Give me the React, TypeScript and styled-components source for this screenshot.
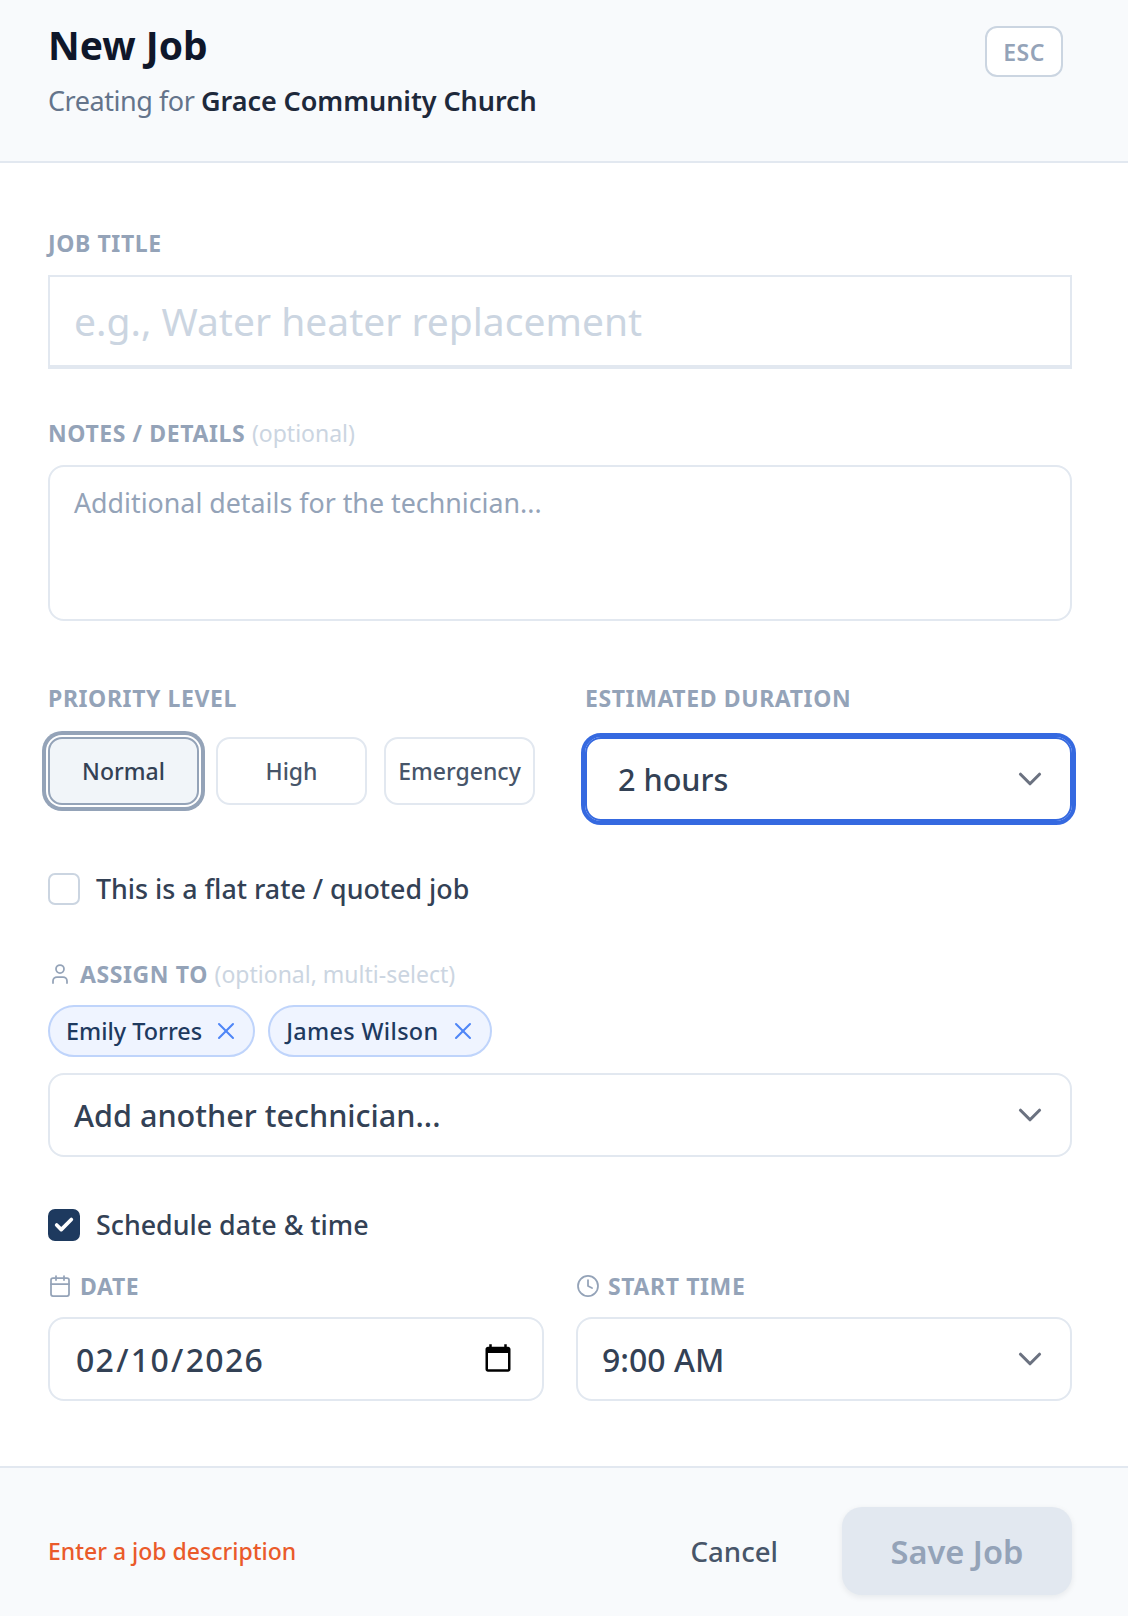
import * as React from "react";
import styled, { createGlobalStyle } from "styled-components";
import { Calendar, Check, ChevronDown, Clock, User, X } from "lucide-react";

const GlobalStyle = createGlobalStyle`
    html, body {
        margin: 0;
        background: #ffffff;
    }
    * {
        box-sizing: border-box;
    }
`;

const SModal = styled.div`
    width: 1128px;
    height: 1616px;
    display: flex;
    flex-direction: column;
    font-family: "Noto Sans", "Open Sans", sans-serif;
    color: #334155;
`;

const SHeader = styled.header`
    height: 163px;
    padding: 23px 65px 0 48px;
    display: flex;
    justify-content: space-between;
    align-items: flex-start;
    background: #f8fafc;
    border-bottom: 2px solid #e2e8f0;
`;

const STitle = styled.h1`
    margin: 0;
    font-size: 39px;
    line-height: 44px;
    font-weight: 700;
    color: #0f172a;
`;

const SSubtitle = styled.p`
    margin: 17px 0 0;
    font-size: 27px;
    line-height: 34px;
    color: #64748b;
    letter-spacing: -0.45px;

    strong {
        font-weight: 600;
        letter-spacing: -0.07px;
        color: #1e293b;
    }
`;

const SEsc = styled.span`
    margin-top: 3px;
    width: 78px;
    height: 51px;
    display: flex;
    align-items: center;
    justify-content: center;
    background: #ffffff;
    border: 2px solid #cbd5e1;
    border-radius: 12px;
    font-size: 23px;
    font-weight: 600;
    letter-spacing: 0.5px;
    color: #94a3b8;
`;

const SForm = styled.form`
    flex: 1;
    padding: 66px 56px 0 48px;
    display: flex;
    flex-direction: column;
`;

const SLabel = styled.label<{ $mb?: number }>`
    display: flex;
    align-items: center;
    gap: 8px;
    height: 28px;
    margin-bottom: ${({ $mb }) => $mb ?? 16}px;
    font-size: 23px;
    font-weight: 700;
    letter-spacing: 0.6px;
    color: #94a3b8;
    white-space: pre;

    svg {
        color: #94a3b8;
    }
`;

const SOptional = styled.span`
    font-weight: 400;
    letter-spacing: 0;
    color: #cbd5e1;
`;

const STitleInput = styled.input`
    width: 100%;
    height: 94px;
    padding: 0 24px 2px;
    border: 2px solid #e2e8f0;
    border-bottom-width: 4px;
    border-radius: 0;
    outline: none;
    font-family: inherit;
    font-size: 39px;
    color: #334155;

    &::placeholder {
        color: #cbd5e1;
    }
`;

const SNotes = styled.textarea`
    display: block;
    width: 100%;
    height: 156px;
    padding: 19px 24px;
    border: 2px solid #e2e8f0;
    border-radius: 16px;
    outline: none;
    resize: none;
    font-family: inherit;
    font-size: 26.8px;
    line-height: 34px;

    &::placeholder {
        color: #94a3b8;
    }
`;

const SColumns = styled.div<{ $gap: number }>`
    display: grid;
    grid-template-columns: 1fr 1fr;
    column-gap: ${({ $gap }) => $gap}px;
`;

const SPriorityRow = styled.div`
    display: grid;
    grid-template-columns: repeat(3, 1fr);
    gap: 17px;
`;

const SPriority = styled.button<{ $active?: boolean }>`
    height: 68px;
    padding: 0;
    font-family: inherit;
    font-size: 23px;
    font-weight: 500;
    color: #475569;
    background: ${({ $active }) => ($active ? "#f1f5f9" : "#ffffff")};
    border: 2px solid ${({ $active }) => ($active ? "#94a3b8" : "#e2e8f0")};
    border-radius: 14px;
    ${({ $active }) =>
        $active
            ? `color: #334155; box-shadow: 0 0 0 2px #fff, 0 0 0 6px #94a3b8;`
            : ""}
`;

const SSelect = styled.div<{ $focused?: boolean; $size?: number }>`
    height: 84px;
    padding: 0 21px 0 ${({ $focused }) => ($focused ? 31 : 24)}px;
    display: flex;
    align-items: center;
    justify-content: space-between;
    font-size: ${({ $size }) => $size ?? 30.6}px;
    font-weight: 500;
    color: #334155;
    background: #ffffff;
    border: 2px solid #e2e8f0;
    border-radius: 16px;
    ${({ $focused }) =>
        $focused ? `border-color: #3569e0; outline: 4px solid #3569e0;` : ""}

    svg {
        color: #6b7280;
    }
`;

const SCheckRow = styled.div<{ $mt: number }>`
    display: flex;
    align-items: center;
    gap: 16px;
    height: 32px;
    margin-top: ${({ $mt }) => $mt}px;
    font-size: 26.8px;
    line-height: 32px;
    font-weight: 500;
    color: #334155;
`;

const SCheckBox = styled.span<{ $checked?: boolean }>`
    width: 32px;
    height: 32px;
    display: flex;
    align-items: center;
    justify-content: center;
    border-radius: 7px;
    background: ${({ $checked }) => ($checked ? "#1e3a5f" : "#ffffff")};
    border: 2px solid ${({ $checked }) => ($checked ? "#1e3a5f" : "#cbd5e1")};
    color: #ffffff;
`;

const SChips = styled.div`
    display: flex;
    gap: 13px;
    margin-bottom: 16px;
`;

const SChip = styled.span<{ $tracking?: number }>`
    height: 52px;
    padding: 0 13px 0 16px;
    display: flex;
    align-items: center;
    gap: 10px;
    font-size: 23.4px;
    font-weight: 500;
    letter-spacing: ${({ $tracking }) => $tracking ?? 0}px;
    color: #1e3a5f;
    background: #eff4ff;
    border: 2px solid #bfd4fb;
    border-radius: 26px;

    svg {
        color: #4f86f7;
    }
`;

const SDateInput = styled.input`
    width: 100%;
    height: 84px;
    padding: 0 28px 0 25px;
    font-family: inherit;
    font-size: 32px;
    font-weight: 500;
    letter-spacing: 1.3px;
    color: #334155;
    background: #ffffff;
    border: 2px solid #e2e8f0;
    border-radius: 16px;
    outline: none;

    &::-webkit-calendar-picker-indicator {
        width: 32px;
        height: 32px;
        padding: 0;
        margin: 0;
    }
`;

const SFooter = styled.footer`
    height: 150px;
    padding: 39px 56px 21px 48px;
    display: flex;
    align-items: center;
    justify-content: space-between;
    background: #f8fafc;
    border-top: 2px solid #e2e8f0;
`;

const SError = styled.span`
    font-size: 23px;
    font-weight: 500;
    color: #ea5a2a;
`;

const SActions = styled.div`
    display: flex;
    align-items: center;
    gap: 64px;
`;

const SCancel = styled.button`
    padding: 0;
    border: 0;
    background: none;
    font-family: inherit;
    font-size: 27.6px;
    font-weight: 500;
    color: #475569;
`;

const SSave = styled.button`
    width: 230px;
    height: 88px;
    border: 0;
    border-radius: 20px;
    font-family: inherit;
    font-size: 32.6px;
    font-weight: 600;
    color: #94a3b8;
    background: #e2e8f0;
    box-shadow: 0 2px 6px rgba(15, 23, 42, 0.08);
`;

const SSpaced = styled.div<{ $mt: number }>`
    margin-top: ${({ $mt }) => $mt}px;
`;

const App: React.FunctionComponent = () => {
    return (
        <SModal>
            <GlobalStyle />
            <SHeader>
                <div>
                    <STitle>New Job</STitle>
                    <SSubtitle>
                        Creating for <strong>Grace Community Church</strong>
                    </SSubtitle>
                </div>
                <SEsc>ESC</SEsc>
            </SHeader>

            <SForm>
                <SLabel $mb={18}>JOB TITLE</SLabel>
                <STitleInput placeholder="e.g., Water heater replacement" />

                <SSpaced $mt={50}>
                    <SLabel $mb={18}>
                        <span>
                            NOTES / DETAILS <SOptional>(optional)</SOptional>
                        </span>
                    </SLabel>
                    <SNotes placeholder="Additional details for the technician..." />
                </SSpaced>

                <SSpaced $mt={63}>
                    <SColumns $gap={50}>
                        <div>
                            <SLabel $mb={25}>PRIORITY LEVEL</SLabel>
                            <SPriorityRow>
                                <SPriority type="button" $active>
                                    Normal
                                </SPriority>
                                <SPriority type="button">High</SPriority>
                                <SPriority type="button">Emergency</SPriority>
                            </SPriorityRow>
                        </div>
                        <div>
                            <SLabel $mb={25}>ESTIMATED DURATION</SLabel>
                            <SSelect $focused>
                                2 hours
                                <ChevronDown size={38} strokeWidth={2} />
                            </SSelect>
                        </div>
                    </SColumns>
                </SSpaced>

                <SCheckRow $mt={52}>
                    <SCheckBox />
                    This is a flat rate / quoted job
                </SCheckRow>

                <SSpaced $mt={55}>
                    <SLabel $mb={17}>
                        <User size={24} strokeWidth={1.75} />
                        <span>
                            ASSIGN TO <SOptional>(optional, multi-select)</SOptional>
                        </span>
                    </SLabel>
                    <SChips>
                        <SChip>
                            Emily Torres
                            <X size={28} strokeWidth={1.75} />
                        </SChip>
                        <SChip $tracking={0.35}>
                            James Wilson
                            <X size={28} strokeWidth={1.75} />
                        </SChip>
                    </SChips>
                    <SSelect>
                        Add another technician...
                        <ChevronDown size={38} strokeWidth={2} />
                    </SSelect>
                </SSpaced>

                <SCheckRow $mt={52}>
                    <SCheckBox $checked>
                        <Check size={22} strokeWidth={4} />
                    </SCheckBox>
                    Schedule date &amp; time
                </SCheckRow>

                <SSpaced $mt={31}>
                    <SColumns $gap={32}>
                        <div>
                            <SLabel $mb={17}>
                                <Calendar size={24} strokeWidth={1.75} />
                                DATE
                            </SLabel>
                            <SDateInput type="date" defaultValue="2026-02-10" />
                        </div>
                        <div>
                            <SLabel $mb={17}>
                                <Clock size={24} strokeWidth={1.75} />
                                START TIME
                            </SLabel>
                            <SSelect $size={32}>
                                9:00 AM
                                <ChevronDown size={38} strokeWidth={2} />
                            </SSelect>
                        </div>
                    </SColumns>
                </SSpaced>
            </SForm>

            <SFooter>
                <SError>Enter a job description</SError>
                <SActions>
                    <SCancel type="button">Cancel</SCancel>
                    <SSave type="button" disabled>
                        Save Job
                    </SSave>
                </SActions>
            </SFooter>
        </SModal>
    );
};

export default App;
